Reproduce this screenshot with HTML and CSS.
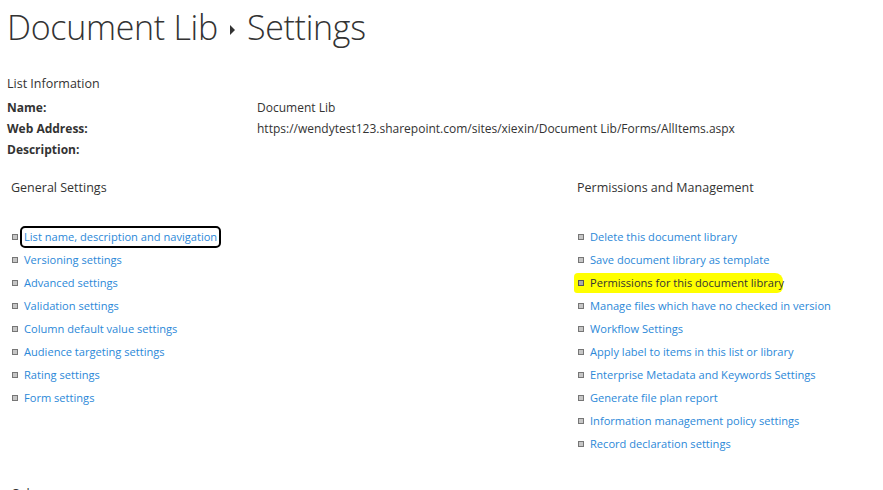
FILE: index.html
```html
<!DOCTYPE html>
<html>
<head>
<meta charset="utf-8">
<link rel="stylesheet" href="styles.css">
</head>
<body>
<div class="page">
  <h1 class="title"><span>Document Lib</span><span class="sep"></span><span>Settings</span></h1>
  <section class="info">
    <div class="info-head">List Information</div>
    <div class="info-grid">
      <div class="label">Name:</div><div class="value">Document Lib</div>
      <div class="label">Web Address:</div><div class="value">https://wendytest123.sharepoint.com/sites/xiexin/Document Lib/Forms/AllItems.aspx</div>
      <div class="label">Description:</div><div class="value"></div>
    </div>
  </section>
  <div class="columns">
    <div class="col">
      <div class="col-head">General Settings</div>
      <ul class="links">
        <li><a class="focused">List name, description and navigation</a></li>
        <li><a>Versioning settings</a></li>
        <li><a>Advanced settings</a></li>
        <li><a>Validation settings</a></li>
        <li><a>Column default value settings</a></li>
        <li><a>Audience targeting settings</a></li>
        <li><a>Rating settings</a></li>
        <li><a>Form settings</a></li>
      </ul>
    </div>
    <div class="col right">
      <div class="col-head">Permissions and Management</div>
      <ul class="links">
        <li><a>Delete this document library</a></li>
        <li><a>Save document library as template</a></li>
        <li class="hl"><a>Permissions for this document library</a></li>
        <li><a>Manage files which have no checked in version</a></li>
        <li><a>Workflow Settings</a></li>
        <li><a>Apply label to items in this list or library</a></li>
        <li><a>Enterprise Metadata and Keywords Settings</a></li>
        <li><a>Generate file plan report</a></li>
        <li><a>Information management policy settings</a></li>
        <li><a>Record declaration settings</a></li>
      </ul>
    </div>
  </div>
  <div class="bottom-head">Columns</div>
</div>
</body>
</html>
```
FILE: styles.css
```css
html, body { margin: 0; padding: 0; background: #fff; }
body { font-family: "Open Sans", "Noto Sans", sans-serif; font-size: 12px; color: #333; overflow: hidden; height: 490px; }
.page { padding: 0 0 0 7px; height: 490px; overflow: hidden; }
.title { margin: 0; padding: 0; height: 54px; font-weight: 300; font-size: 34px; color: #333; display: flex; align-items: center; gap: 12px; letter-spacing: -0.3px; line-height: 46px; }
.title .sep { width: 0; height: 0; border-top: 5px solid transparent; border-bottom: 5px solid transparent; border-left: 5px solid #333; margin-top: 6px; }
.info { margin-top: 19px; }
.info-head { font-size: 12.5px; height: 22px; line-height: 22px; }
.info-grid { display: grid; grid-template-columns: 250px 1fr; grid-auto-rows: 21px; line-height: 21px; margin-top: 2px; }
.label { font-weight: 700; }
.columns { display: grid; grid-template-columns: 566px 1fr; margin-top: 18px; padding-left: 4px; }
.col-head { font-size: 12.5px; height: 20px; line-height: 20px; }
.links { list-style: none; margin: 27px 0 0; padding: 0; }
.links li { height: 23px; display: flex; align-items: center; gap: 6px; position: relative; z-index: 0; }
.links li::before { content: ""; width: 4px; height: 4px; background: #c6c6c6; border: 1px solid #767676; flex: none; margin-left: 1px; }
.links a { color: #2b88d8; font-size: 11.1px; line-height: 18px; padding: 0 2px; margin-left: -2px; }
.links a.focused { outline: 2px solid #000; border-radius: 3px; }
.links li.hl::after { content: ""; position: absolute; left: -3px; top: 2px; width: 209px; height: 20px; background: #ffff00; border-radius: 4px 8px 6px 3px; z-index: -1; }
.links li.hl a { color: #333; }
.links li.hl::before { background: #aaa; border-color: #555; }
.bottom-head { margin-top: 29px; padding-left: 4px; font-size: 12.5px; line-height: 20px; }
```
